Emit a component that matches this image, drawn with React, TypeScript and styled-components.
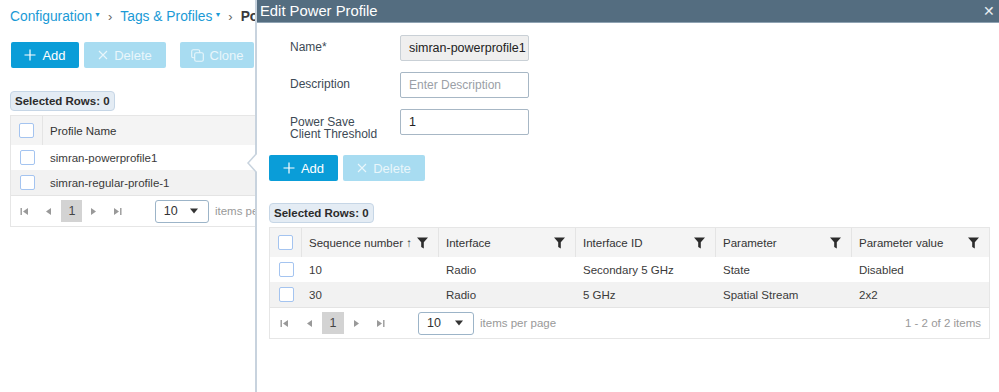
import React from "react";
import styled, { createGlobalStyle } from "styled-components";

const GlobalStyle = createGlobalStyle`
  html, body {
    margin: 0;
    padding: 0;
    background: #ffffff;
    font-family: "Liberation Sans", Arial, sans-serif;
    color: #39393b;
    overflow: hidden;
  }
  * { box-sizing: border-box; }
`;

const Page = styled.div`
  position: relative;
  width: 999px;
  height: 392px;
  overflow: hidden;
`;

const Main = styled.div`
  padding: 6px 0 0 10px;
  width: 255px;
  overflow: hidden;
`;

const Crumbs = styled.div`
  display: flex;
  align-items: center;
  height: 20px;
  font-size: 13.8px;
  white-space: nowrap;
`;

const CrumbLink = styled.span`
  color: #1a9ad6;
  display: inline-flex;
  align-items: center;
`;

const Caret = styled.span`
  font-size: 7px;
  margin-left: 2px;
  margin-top: -4px;
`;

const Sep = styled.span`
  color: #666;
  font-size: 13px;
  margin: 0 8px 0 7px;
`;

const Current = styled.span`
  color: #39393b;
  font-weight: bold;
`;

const Toolbar = styled.div<{ $top: number }>`
  display: flex;
  gap: 5px;
  margin-top: ${(p) => p.$top}px;
`;

const Btn = styled.button<{ $disabled?: boolean; $w: number; $gap?: number }>`
  height: 26px;
  width: ${(p) => p.$w}px;
  margin-left: ${(p) => p.$gap || 0}px;
  border: none;
  border-radius: 2px;
  background: ${(p) => (p.$disabled ? "#a8dcf1" : "#0a9dd8")};
  color: ${(p) => (p.$disabled ? "#e9f6fb" : "#ffffff")};
  font-family: "Liberation Sans", Arial, sans-serif;
  font-size: 13px;
  display: flex;
  align-items: center;
  justify-content: center;
  gap: 6px;
  padding: 0;
`;

const Badge = styled.div<{ $top: number }>`
  display: inline-block;
  margin-top: ${(p) => p.$top}px;
  height: 20px;
  line-height: 19px;
  padding: 0 4px;
  font-size: 11.5px;
  font-weight: bold;
  color: #2b2b2b;
  background: #e4ecf4;
  border: 1px solid #c6d6e6;
  border-radius: 4px;
  white-space: nowrap;
`;

const Table = styled.div<{ $width: number; $cols: string }>`
  margin-top: 4px;
  width: ${(p) => p.$width}px;
  border: 1px solid #e6e6e6;
  font-size: 11.5px;
  display: grid;
  grid-template-columns: ${(p) => p.$cols};
`;

const HeadCell = styled.div<{ $last?: boolean }>`
  height: 29px;
  background: #f4f4f4;
  border-right: ${(p) => (p.$last ? "none" : "1px solid #e4e4e4")};
  display: flex;
  align-items: center;
  justify-content: space-between;
  padding: 0 10px 0 7px;
  color: #333;
  white-space: nowrap;
`;

const Cell = styled.div<{ $alt?: boolean }>`
  height: 25px;
  background: ${(p) => (p.$alt ? "#f2f2f2" : "#ffffff")};
  display: flex;
  align-items: center;
  padding: 0 7px;
  color: #3a3a3a;
  white-space: nowrap;
  overflow: hidden;
`;

const CheckCell = styled.div<{ $head?: boolean; $alt?: boolean }>`
  height: ${(p) => (p.$head ? 29 : 25)}px;
  background: ${(p) => (p.$head ? "#f4f4f4" : p.$alt ? "#f2f2f2" : "#ffffff")};
  border-right: ${(p) => (p.$head ? "1px solid #e4e4e4" : "none")};
  display: flex;
  align-items: center;
  justify-content: center;
`;

const Check = styled.span`
  width: 15px;
  height: 15px;
  border: 1.5px solid #a4c4f0;
  border-radius: 2px;
  background: #fff;
`;

const Pager = styled.div`
  grid-column: 1 / -1;
  height: 31px;
  border-top: 1px solid #e4e4e4;
  display: flex;
  align-items: center;
  padding: 0 8px 0 6px;
  color: #999;
  font-size: 11.5px;
  white-space: nowrap;
`;

const PageNav = styled.span<{ $gap?: number }>`
  width: 16px;
  margin-left: ${(p) => p.$gap || 0}px;
  display: inline-flex;
  justify-content: center;
  color: #999;
`;

const PageNum = styled.span`
  width: 22px;
  height: 22px;
  background: #d3d3d3;
  color: #444;
  font-size: 12.5px;
  display: inline-flex;
  align-items: center;
  justify-content: center;
  margin: 0 5px 0 6px;
`;

const SizeSelect = styled.div`
  margin-left: 30px;
  width: 56px;
  height: 23px;
  border: 1px solid #9cb4c8;
  border-radius: 3px;
  display: flex;
  align-items: center;
  justify-content: space-between;
  padding: 0 10px 0 8px;
  color: #333;
  font-size: 12.5px;
`;

const PerPage = styled.span`
  margin-left: 6px;
`;

const Total = styled.span`
  margin-left: auto;
`;

const Panel = styled.div`
  position: absolute;
  top: 0;
  left: 255px;
  right: 0;
  bottom: 0;
  background: #fff;
  border-left: 2px solid #c8d3de;
`;

const Pointer = styled.div`
  position: absolute;
  left: -10px;
  top: 152px;
  width: 0;
  height: 0;
  border-top: 11px solid transparent;
  border-bottom: 11px solid transparent;
  border-right: 10px solid #c8d3de;
  &::after {
    content: "";
    position: absolute;
    left: 2px;
    top: -10px;
    border-top: 10px solid transparent;
    border-bottom: 10px solid transparent;
    border-right: 9px solid #ffffff;
  }
`;

const PanelHead = styled.div`
  height: 23px;
  background: #546d80;
  border-bottom: 1px solid #8fa3b3;
  color: #fff;
  font-size: 14.8px;
  display: flex;
  align-items: center;
  justify-content: space-between;
  padding: 0 4px 0 3px;
`;

const Close = styled.span`
  font-size: 14px;
  color: #e8eef2;
`;

const PanelBody = styled.div`
  padding: 12px 0 0 12px;
`;

const Form = styled.div`
  display: grid;
  grid-template-columns: 110px 129px;
  grid-auto-rows: 26px;
  row-gap: 11px;
  padding-left: 21px;
  align-items: center;
`;

const Label = styled.div<{ $twoLine?: boolean }>`
  font-size: 12px;
  color: #3d4a55;
  line-height: 11.5px;
  white-space: nowrap;
  align-self: ${(p) => (p.$twoLine ? "start" : "center")};
  padding-top: ${(p) => (p.$twoLine ? 8 : 0)}px;
`;

const Field = styled.div<{ $readonly?: boolean; $placeholder?: boolean }>`
  height: 26px;
  border: 1px solid ${(p) => (p.$readonly ? "#c9d0d6" : "#a7b7c5")};
  border-radius: 2px;
  background: ${(p) => (p.$readonly ? "#efefef" : "#fff")};
  font-size: ${(p) => (p.$placeholder ? "12px" : "12.5px")};
  color: ${(p) => (p.$placeholder ? "#9aa0a6" : "#222")};
  display: flex;
  align-items: center;
  padding: 0 8px;
  white-space: nowrap;
`;

const PlusIcon = () => (
  <svg width="12" height="12" viewBox="0 0 12 12">
    <path d="M6 0.5v11M0.5 6h11" stroke="currentColor" strokeWidth="1.2" fill="none" />
  </svg>
);

const XIcon = () => (
  <svg width="10" height="10" viewBox="0 0 10 10">
    <path d="M1 1l8 8M9 1l-8 8" stroke="currentColor" strokeWidth="1.1" fill="none" />
  </svg>
);

const CloneIcon = () => (
  <svg width="13" height="13" viewBox="0 0 13 13">
    <rect x="0.7" y="0.7" width="8" height="8" rx="1.5" stroke="currentColor" strokeWidth="1.1" fill="none" />
    <rect x="3.7" y="3.7" width="8.6" height="8.6" rx="1.5" stroke="currentColor" strokeWidth="1.1" fill="#a8dcf1" />
  </svg>
);

const Funnel = () => (
  <svg width="11" height="12" viewBox="0 0 11 12">
    <path d="M0 0.5h11L6.8 5.3v6.2L4.2 10V5.3z" fill="#2c2c2c" />
  </svg>
);

const NavIcon = ({ kind }: { kind: "first" | "prev" | "next" | "last" }) => {
  const left = kind === "first" || kind === "prev";
  const bar = kind === "first" || kind === "last";
  return (
    <svg width="9" height="9" viewBox="0 0 9 9">
      {left ? <path d="M8 1v7L3 4.5z" fill="#999" /> : <path d="M1 1v7l5-3.5z" fill="#999" />}
      {bar && (left ? <rect x="0.5" y="1" width="1.4" height="7" fill="#999" /> : <rect x="7.1" y="1" width="1.4" height="7" fill="#999" />)}
    </svg>
  );
};

const Caret2 = () => (
  <svg width="8" height="6" viewBox="0 0 8 6">
    <path d="M0 0.5h8L4 5.5z" fill="#333" />
  </svg>
);

const Pagination = ({ total }: { total?: string }) => (
  <Pager>
    <PageNav>
      <NavIcon kind="first" />
    </PageNav>
    <PageNav $gap={8}>
      <NavIcon kind="prev" />
    </PageNav>
    <PageNum>1</PageNum>
    <PageNav>
      <NavIcon kind="next" />
    </PageNav>
    <PageNav $gap={7}>
      <NavIcon kind="last" />
    </PageNav>
    <SizeSelect>
      10 <Caret2 />
    </SizeSelect>
    <PerPage>items per page</PerPage>
    {total && <Total>{total}</Total>}
  </Pager>
);

const rows = [
  { seq: "10", iface: "Radio", id: "Secondary 5 GHz", param: "State", value: "Disabled" },
  { seq: "30", iface: "Radio", id: "5 GHz", param: "Spatial Stream", value: "2x2" },
];

const headers = ["Interface", "Interface ID", "Parameter", "Parameter value"];

export default function App() {
  return (
    <Page>
      <GlobalStyle />
      <Main>
        <Crumbs>
          <CrumbLink>
            Configuration<Caret>▼</Caret>
          </CrumbLink>
          <Sep>›</Sep>
          <CrumbLink>
            Tags &amp; Profiles<Caret>▼</Caret>
          </CrumbLink>
          <Sep>›</Sep>
          <Current>Power Save</Current>
        </Crumbs>
        <Toolbar $top={16}>
          <Btn $w={68} style={{ marginLeft: 1 }}>
            <PlusIcon /> Add
          </Btn>
          <Btn $w={82} $disabled>
            <XIcon /> Delete
          </Btn>
          <Btn $w={74} $disabled $gap={9}>
            <CloneIcon /> Clone
          </Btn>
        </Toolbar>
        <Badge $top={23}>Selected Rows: 0</Badge>
        <Table $width={290} $cols="32px 1fr">
          <CheckCell $head>
            <Check />
          </CheckCell>
          <HeadCell $last>Profile Name</HeadCell>
          <CheckCell>
            <Check />
          </CheckCell>
          <Cell>simran-powerprofile1</Cell>
          <CheckCell $alt>
            <Check />
          </CheckCell>
          <Cell $alt>simran-regular-profile-1</Cell>
          <Pagination />
        </Table>
      </Main>

      <Panel>
        <Pointer />
        <PanelHead>
          <span>Edit Power Profile</span>
          <Close>✕</Close>
        </PanelHead>
        <PanelBody>
          <Form>
            <Label>Name*</Label>
            <Field $readonly>simran-powerprofile1</Field>
            <Label>Description</Label>
            <Field $placeholder>Enter Description</Field>
            <Label $twoLine>
              Power Save
              <br />
              Client Threshold
            </Label>
            <Field>1</Field>
          </Form>
          <Toolbar $top={20}>
            <Btn $w={69}>
              <PlusIcon /> Add
            </Btn>
            <Btn $w={82} $disabled>
              <XIcon /> Delete
            </Btn>
          </Toolbar>
          <Badge $top={22}>Selected Rows: 0</Badge>
          <Table $width={721} $cols="32px 137px 137px 140px 136px 1fr">
            <CheckCell $head>
              <Check />
            </CheckCell>
            <HeadCell>
              <span>Sequence number ↑</span>
              <Funnel />
            </HeadCell>
            {headers.map((h, i) => (
              <HeadCell key={h} $last={i === headers.length - 1}>
                <span>{h}</span>
                <Funnel />
              </HeadCell>
            ))}
            {rows.map((r, i) => (
              <React.Fragment key={r.seq}>
                <CheckCell $alt={i === 1}>
                  <Check />
                </CheckCell>
                <Cell $alt={i === 1}>{r.seq}</Cell>
                <Cell $alt={i === 1}>{r.iface}</Cell>
                <Cell $alt={i === 1}>{r.id}</Cell>
                <Cell $alt={i === 1}>{r.param}</Cell>
                <Cell $alt={i === 1}>{r.value}</Cell>
              </React.Fragment>
            ))}
            <Pagination total="1 - 2 of 2 items" />
          </Table>
        </PanelBody>
      </Panel>
    </Page>
  );
}
